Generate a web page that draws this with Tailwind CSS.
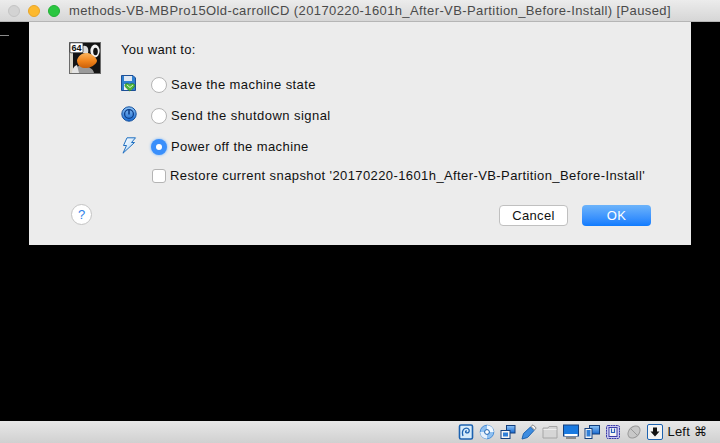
<!DOCTYPE html>
<html lang="en">
<head>
    <meta charset="UTF-8">
    <title>VirtualBox close dialog</title>
    <script src="https://cdn.jsdelivr.net/npm/@tailwindcss/browser@4"></script>
</head>
<body class="w-[720px] h-[443px] overflow-hidden bg-black font-['Liberation_Sans',sans-serif] text-[13px] text-[#111]">
<svg width="0" height="0" class="absolute">
    <defs>
        <linearGradient id="blue" x1="0" y1="0" x2="0" y2="1"><stop offset="0" stop-color="#8fc4f5"/><stop offset="1" stop-color="#1668d0"/></linearGradient>
        <linearGradient id="pale" x1="0" y1="0" x2="1" y2="1"><stop offset="0" stop-color="#ffffff"/><stop offset="1" stop-color="#a9d3f7"/></linearGradient>
        <linearGradient id="beak" x1="0" y1="0" x2="0" y2="1"><stop offset="0" stop-color="#fbb45e"/><stop offset="0.55" stop-color="#f0831a"/><stop offset="1" stop-color="#c95f08"/></linearGradient>
    </defs>
</svg>
<div class="flex flex-col h-[443px]">

    <!-- title bar -->
    <div class="h-[22px] shrink-0 flex items-center bg-gradient-to-b from-[#ececec] to-[#d6d6d6] border-b border-[#b5b5b5]">
        <div class="flex gap-2 pl-2">
            <span class="w-3 h-3 rounded-full bg-[#d3d3d3] border border-[#c4c4c4]"></span>
            <span class="w-3 h-3 rounded-full bg-[#fdb92e] border border-[#e8a528]"></span>
            <span class="w-3 h-3 rounded-full bg-[#2ac640] border border-[#22b035]"></span>
        </div>
        <div class="pl-[9px] text-[#4a4a4a] tracking-[0.39px] whitespace-nowrap">methods-VB-MBPro15Old-carrollCD (20170220-1601h_After-VB-Partition_Before-Install) [Paused]</div>
    </div>

    <!-- guest screen with sheet -->
    <div class="flex-1 relative flex justify-center items-start">
        <div class="absolute left-0 top-[13px] w-[9px] h-px bg-[#8a8a8a]"></div>
        <div class="w-[662px] h-[223px] bg-[#ececec] flex flex-col px-10 pt-5">
            <div class="flex flex-1">
                <!-- guest os icon -->
                <svg class="shrink-0" width="32" height="32" viewBox="0 0 32 32">
                    <rect x="0.5" y="0.5" width="31" height="31" fill="#141414" stroke="#6b6b6b"/>
                    <rect x="1" y="8" width="3" height="23" fill="#d8d4c8"/>
                    <path d="M4 31 C5 25 9 23 15 24 C21 25 24 27 25 31 Z" fill="#9a9a9a"/>
                    <path d="M3 31 C3 27 5 24 8 23 L10 31 Z" fill="#e4e4e4"/>
                    <ellipse cx="26" cy="9" rx="4.6" ry="6.4" fill="#f2f2f2"/>
                    <ellipse cx="26.5" cy="9.5" rx="2.3" ry="3.8" fill="#111"/>
                    <path d="M14 4 C18 3 20 6 19 11 L14 11 Z" fill="#dcdcdc"/>
                    <path d="M8 18 C10 12 15 10.5 19 11 C23 12 28 16 28 19 C27 23 21 26.5 15 26 C10 25.5 8 21.5 8 18 Z" fill="url(#beak)"/>
                    <rect x="1" y="0.8" width="13" height="10" rx="1" fill="#fff" stroke="#222" stroke-width="0.7"/>
                    <text x="7.5" y="9" text-anchor="middle" font-family="Liberation Sans" font-size="9" font-weight="700" fill="#111">64</text>
                </svg>
                <div class="pl-5">
                    <div class="h-[27px] leading-4 tracking-[0.3px]">You want to:</div>
                    <div class="flex flex-col">
                        <div class="h-[31px] flex items-center">
                            <svg width="16" height="17" viewBox="0 0 16 17" class="-mt-[2px]">
                                <path d="M0.5 0.5H12L14.5 3V15.5H0.5Z" fill="#2f7fd0" stroke="#1c4f96"/>
                                <rect x="3" y="1" width="8" height="5" fill="#dfe8f2"/>
                                <rect x="3" y="9" width="8" height="6" fill="#f2f2f2"/>
                                <path d="M4 9.5 C5 8 7 8 8.5 9.5 C10 8 12.5 8 13.5 9.5 C14.5 11 13.5 12.5 8.8 16 C5 13 3.2 11 4 9.5 Z" fill="#52b53c" stroke="#206f1f" stroke-width="0.5"/>
                                <path d="M6 10 L9 12.5 L12 10" fill="none" stroke="#d6f5c4" stroke-width="1"/>
                            </svg>
                            <span class="w-[14px]"></span>
                            <span class="w-4 h-4 rounded-full bg-white border border-[#b4b4b4]"></span>
                            <span class="pl-1 tracking-[0.41px]">Save the machine state</span>
                        </div>
                        <div class="h-[31px] flex items-center">
                            <svg width="16" height="17" viewBox="0 0 16 17" class="-mt-[3px]">
                                <circle cx="8" cy="8" r="7.2" fill="url(#blue)" stroke="#14509e"/>
                                <circle cx="8" cy="8" r="4.4" fill="none" stroke="#0f3f8a" stroke-width="1.3"/>
                                <path d="M8 3.5V8.5" stroke="#0f3f8a" stroke-width="1.6"/>
                            </svg>
                            <span class="w-[14px]"></span>
                            <span class="w-4 h-4 rounded-full bg-white border border-[#b4b4b4]"></span>
                            <span class="pl-1 tracking-[0.45px]">Send the shutdown signal</span>
                        </div>
                        <div class="h-[31px] flex items-center">
                            <svg width="16" height="17" viewBox="0 0 16 17" class="-mt-[3px]">
                                <path d="M6 0.8 L14.5 0.8 L10.5 5.5 L13.5 5.5 L2 16.2 L5.5 8.5 L2.5 8.5 Z" fill="url(#pale)" stroke="#1f6fc0"/>
                            </svg>
                            <span class="w-[14px]"></span>
                            <span class="w-4 h-4 rounded-full bg-[#3a8ffb] shadow-[0_0_3px_#6aaefc] flex items-center justify-center"><span class="w-[6px] h-[6px] rounded-full bg-white"></span></span>
                            <span class="pl-1 tracking-[0.41px]">Power off the machine</span>
                        </div>
                        <div class="h-[27px] flex items-center pl-[31px]">
                            <span class="w-[14px] h-[14px] rounded-[3px] bg-white border border-[#b4b4b4]"></span>
                            <span class="pl-1 tracking-[0.4px] whitespace-nowrap">Restore current snapshot '20170220-1601h_After-VB-Partition_Before-Install'</span>
                        </div>
                    </div>
                </div>
            </div>
            <!-- buttons -->
            <div class="h-[41px] shrink-0 flex items-start">
                <span class="ml-[2px] w-[21px] h-[21px] rounded-full bg-white border border-[#c4c4c4] text-[#2f7fe8] flex items-center justify-center">?</span>
                <div class="flex-1"></div>
                <button class="mt-[1px] w-[69px] h-[21px] rounded-[4px] bg-white border border-[#c0c0c0] tracking-[0.3px]">Cancel</button>
                <button class="mt-[1px] ml-[14px] w-[69px] h-[21px] rounded-[4px] bg-gradient-to-b from-[#6cb3fa] to-[#0d7bfe] text-white tracking-[0.3px]">OK</button>
            </div>
        </div>
    </div>

    <!-- status bar -->
    <div class="h-[22px] shrink-0 bg-gradient-to-b from-[#e8e8e8] to-[#d0d0d0] flex items-center justify-end pr-[13px] gap-[5px]">
        <svg width="16" height="16" viewBox="0 0 16 16"><rect x="1.5" y="1" width="13" height="14" rx="1.5" fill="#d7ecfb" stroke="#1c62b0" stroke-width="1.6"/><path d="M5 12 C3 6 7 3 10 4.5 C12.5 6 11 9.5 8.5 8.8 C7 8.2 7.5 6.8 8.8 7" fill="none" stroke="#1c62b0" stroke-width="1.3"/></svg>
        <svg width="16" height="16" viewBox="0 0 16 16"><circle cx="8" cy="8" r="6.8" fill="#8fc0f0" stroke="#4a8fd8"/><path d="M8 1.2 A6.8 6.8 0 0 1 14.8 8 L8 8Z" fill="#eef7ff"/><path d="M8 14.8 A6.8 6.8 0 0 1 1.2 8 L8 8Z" fill="#e4f0fc"/><circle cx="8" cy="8" r="2.4" fill="#fff" stroke="#1c62b0"/></svg>
        <svg width="16" height="16" viewBox="0 0 16 16"><rect x="6.5" y="1.5" width="8.5" height="7.5" fill="url(#blue)" stroke="#123f7e"/><rect x="1" y="6.5" width="9" height="8" fill="#f6f6f6" stroke="#123f7e"/><rect x="3" y="8.5" width="5" height="4" fill="#2f7fd8"/></svg>
        <svg width="16" height="16" viewBox="0 0 16 16"><path d="M1 15 L2.5 9.5 L9.5 3 L13 6.5 L6.5 13.5 Z" fill="#3d8ce0" stroke="#1c62b0"/><path d="M10 2.5 L12 0.8 L15.2 4 L13.5 6 Z" fill="#f4f4f4" stroke="#8a8a8a"/></svg>
        <svg width="16" height="16" viewBox="0 0 16 16"><path d="M1 14 V4 H6 L7 2.5 H15 V14 Z" fill="#d6d6d6" stroke="#a6a6a6"/><path d="M1.5 5.5 H14.5" stroke="#efefef"/></svg>
        <svg width="16" height="16" viewBox="0 0 16 16"><rect x="0.5" y="1" width="15" height="11" fill="#1a7ae0" stroke="#123f7e"/><rect x="1.5" y="10" width="13" height="2" fill="#fff"/><rect x="3" y="13" width="10" height="2" fill="#8a8a8a"/></svg>
        <svg width="16" height="16" viewBox="0 0 16 16"><rect x="5.5" y="1.5" width="10" height="8.5" fill="url(#blue)" stroke="#123f7e"/><rect x="1" y="4.5" width="7" height="10" fill="#f6f6f6" stroke="#123f7e"/><rect x="2.5" y="6" width="4" height="6.5" fill="#2f7fd8"/></svg>
        <svg width="16" height="16" viewBox="0 0 16 16"><rect x="1.5" y="1.5" width="13" height="13" rx="1.5" fill="#c9c9f0" stroke="#3c3ca8" stroke-dasharray="2 0.6"/><rect x="4" y="3.5" width="8" height="9" fill="#f4f4f4" stroke="#3c3ca8"/><path d="M6.5 4.5V8.5H9.5V4.5" fill="none" stroke="#2a5fb8" stroke-width="1.2"/></svg>
        <svg width="16" height="16" viewBox="0 0 16 16"><ellipse cx="8" cy="8" rx="5" ry="7" transform="rotate(45 8 8)" fill="#c8c8c8" stroke="#9a9a9a"/><path d="M5 5 L11 11" stroke="#9a9a9a"/></svg>
        <svg width="16" height="16" viewBox="0 0 16 16"><rect x="0.5" y="0.5" width="15" height="15" rx="1.5" fill="#f2f2f2" stroke="#1c62b0"/><path d="M6 3.5H10V7.5H12.5L8 12.5L3.5 7.5H6Z" fill="#111"/></svg>
        <span class="tracking-[0.2px] whitespace-nowrap">Left <span class="font-['DejaVu_Sans']">⌘</span></span>
    </div>
</div>
</body>
</html>
